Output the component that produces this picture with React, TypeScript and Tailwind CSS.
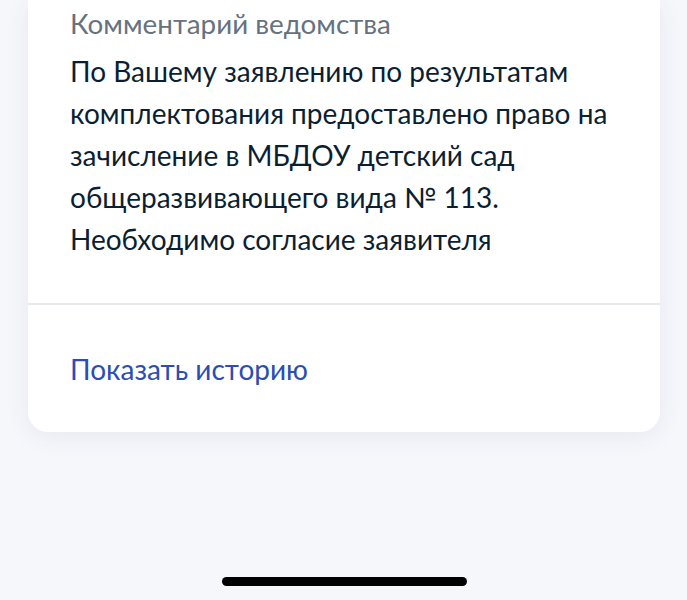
import React from "react";

export default function App() {
  return (
    <div
      className="relative w-[687px] h-[600px] bg-[#f6f7fb] overflow-hidden"
      style={{ fontFamily: "Lato, 'Noto Sans', sans-serif" }}
    >
      <div className="mx-[28px] w-[632px] bg-white rounded-b-[20px] shadow-[0_4px_24px_rgba(40,60,120,0.08)]">
        <div className="px-[42px] pt-[7px] pb-[43px]">
          <div className="text-[27.8px] leading-[34px] text-[#66727f]">Комментарий ведомства</div>
          <div className="mt-[9px] text-[28px] leading-[42px] text-[#0b1f33]">
            По Вашему заявлению по результатам комплектования предоставлено право на зачисление в МБДОУ детский сад общеразвивающего вида № 113. Необходимо согласие заявителя
          </div>
        </div>
        <div className="h-[2px] bg-[#e6e8ec]" />
        <div className="px-[42px] pt-[48px] pb-[47px]">
          <div className="text-[28px] leading-[32px] text-[#2c4db3]">Показать историю</div>
        </div>
      </div>
      <div className="absolute left-[222px] top-[577px] w-[245px] h-[9px] rounded-full bg-black" />
    </div>
  );
}
